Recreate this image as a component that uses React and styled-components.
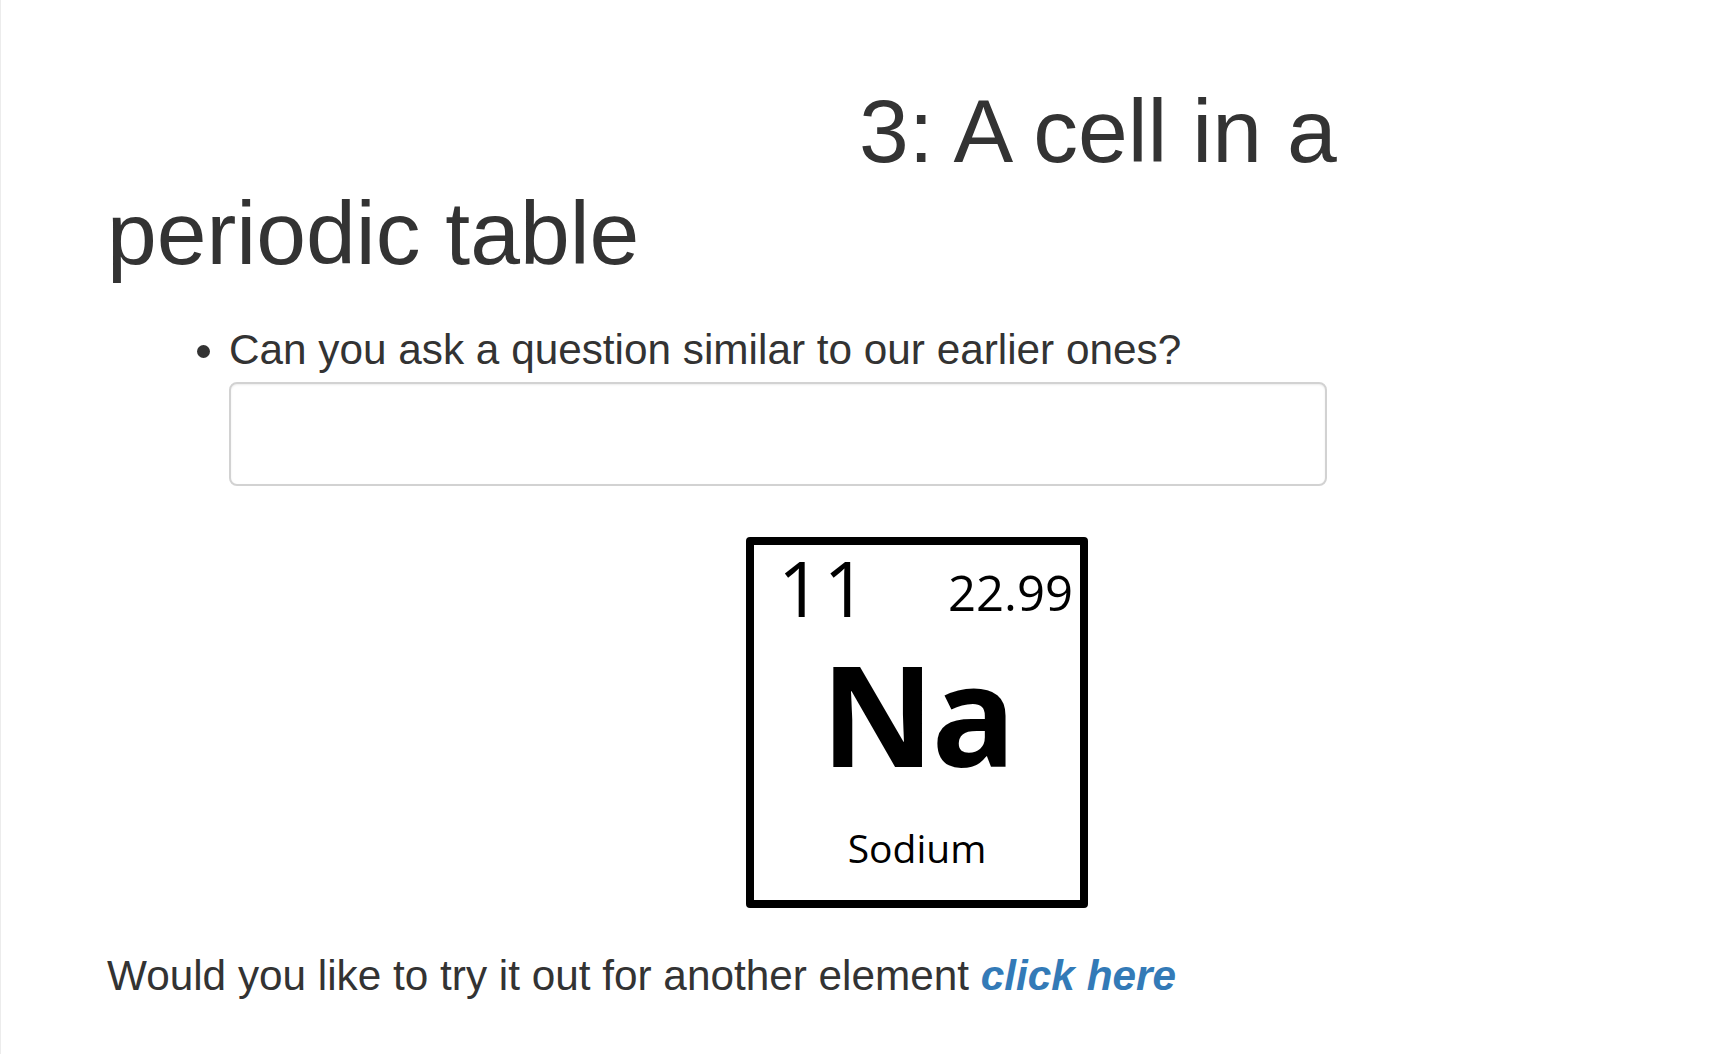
import styled, { createGlobalStyle } from "styled-components";

// Reset do body e fonte base
const GlobalStyle = createGlobalStyle`
  html, body {
    margin: 0;
    padding: 0;
    background: #fff;
  }
  body {
    font-family: "Liberation Sans", Arial, sans-serif;
    color: #333;
  }
`;

// Página com a linha cinza à esquerda
const Page = styled.main`
  min-height: 1054px;
  box-sizing: border-box;
  border-left: 1px solid #ececec;
  padding: 80px 0 0 106px;
`;

// Título grande, primeira linha recuada
const Title = styled.h1`
  margin: 0;
  max-width: 1300px;
  font-size: 89.5px;
  font-weight: 400;
  line-height: 102px;
  text-indent: 752px;
  color: #333;
`;

const QuestionList = styled.ul`
  margin: 42px 0 0;
  padding: 0 0 0 122px;
  list-style: disc;
`;

const QuestionItem = styled.li`
  font-size: 42.3px;
  line-height: 48px;
  color: #333;
`;

// Campo de resposta no estilo bootstrap
const AnswerInput = styled.input`
  display: block;
  box-sizing: border-box;
  width: 1098px;
  height: 104px;
  margin-top: 8px;
  border: 2px solid #d2d2d2;
  border-radius: 8px;
  box-shadow: inset 0 1px 2px rgba(0, 0, 0, 0.08);
  background: #fff;
  font-size: 32px;
  padding: 0 16px;
  outline: none;
`;

// Célula da tabela periódica
const ElementCell = styled.div`
  box-sizing: border-box;
  width: 342px;
  height: 371px;
  margin: 51px 0 0 639px;
  border: 8px solid #000;
  border-radius: 4px;
  display: flex;
  flex-direction: column;
  align-items: center;
  font-family: "Open Sans", "Noto Sans", sans-serif;
  color: #000;
`;

const CellTop = styled.div`
  align-self: stretch;
  display: flex;
  justify-content: space-between;
  align-items: flex-start;
  padding: 0 7px 0 24px;
`;

const CellText = styled.span`
  display: block;
  line-height: 1;
  font-size: ${(p) => p.$size}px;
  font-weight: ${(p) => (p.$bold ? 700 : 400)};
  margin-top: ${(p) => p.$top}px;
  letter-spacing: ${(p) => p.$spacing || 0}px;
`;

const Footer = styled.p`
  margin: 44px 0 0;
  font-size: 42.3px;
  line-height: 48px;
  color: #333;
`;

const MoreLink = styled.a`
  color: #337ab7;
  font-weight: 700;
  font-style: italic;
  text-decoration: none;
  cursor: pointer;
`;

const App = () => {
  return (
    <>
      <GlobalStyle />
      <Page>
        <Title>3: A cell in a periodic table</Title>
        <QuestionList>
          <QuestionItem>
            Can you ask a question similar to our earlier ones?
            <AnswerInput type="text" />
          </QuestionItem>
        </QuestionList>
        <ElementCell>
          <CellTop>
            <CellText $size={76} $top={5} $spacing={2}>11</CellText>
            <CellText $size={49} $top={23}>22.99</CellText>
          </CellTop>
          <CellText $size={140} $bold $top={17} $spacing={-3}>Na</CellText>
          <CellText $size={39} $top={45}>Sodium</CellText>
        </ElementCell>
        <Footer>
          Would you like to try it out for another element <MoreLink>click here</MoreLink>
        </Footer>
      </Page>
    </>
  );
};

export default App;
